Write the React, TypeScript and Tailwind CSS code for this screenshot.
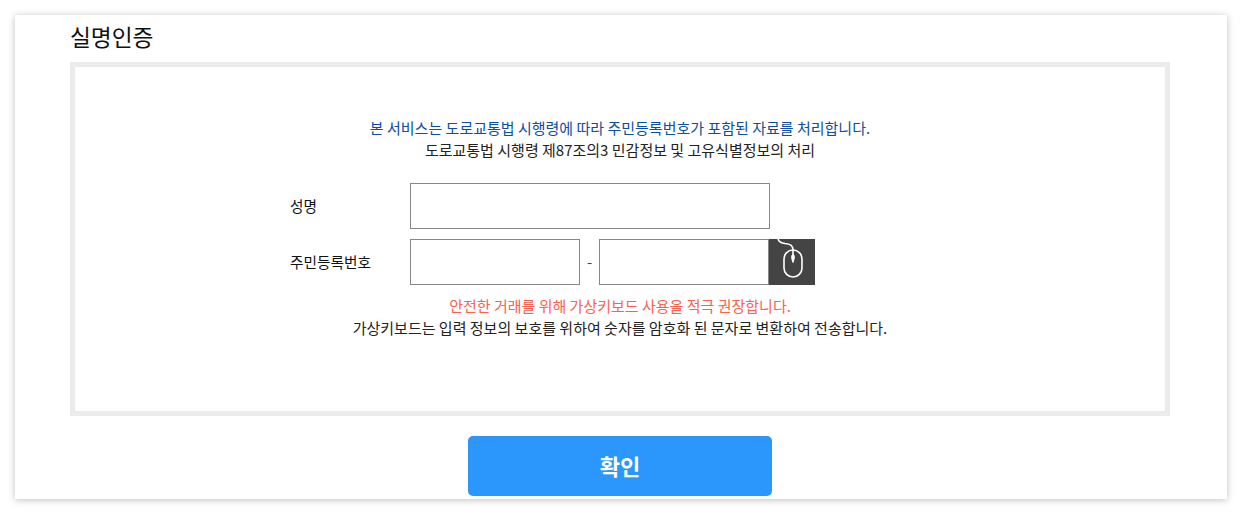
import React from "react";

const MouseIcon = () => (
  <svg width="46" height="46" viewBox="0 0 46 46" fill="none" stroke="#fff" strokeWidth="1.6">
    <path d="M9 0c1 3 3 4 7 4.500c5 .5 8 1.500 8 6.500" />
    <rect x="15" y="11" width="18" height="27" rx="9" />
    <path d="M24 11v4" />
    <path d="M24 15c1.800 1.500 1.800 4 0 8.500c-1.800-4.500-1.800-7 0-8.500z" fill="#fff" strokeWidth="1" />
  </svg>
);

export default function App() {
  return (
    <div className="w-[1242px] h-[514px] bg-white pt-[15px] px-[15px] overflow-hidden font-['Noto_Sans_CJK_KR','Noto_Sans',sans-serif]">
      <div className="h-[484px] bg-white shadow-[0_1px_7px_rgba(0,0,0,0.25)] pl-[55px] pr-[57px]">
        <h2 className="h-[47px] text-[22.700px] leading-[44px] text-[#111]">실명인증</h2>
        <div className="h-[354px] border-[5px] border-[#ebebeb] flex flex-col items-center pt-[50px]">
          <p className="text-[15px] leading-[22px] text-[#0b4ea2]">본 서비스는 도로교통법 시행령에 따라 주민등록번호가 포함된 자료를 처리합니다.</p>
          <p className="text-[15px] leading-[22px] text-[#222]">도로교통법 시행령 제87조의3 민감정보 및 고유식별정보의 처리</p>
          <div className="w-[660px] mt-[22px] flex flex-col gap-[10px] text-[#111] text-[15px]">
            <div className="flex items-center">
              <label className="w-[120px] text-[14.700px]">성명</label>
              <input type="text" className="w-[360px] h-[46px] border border-[#888] bg-white" />
            </div>
            <div className="flex items-center">
              <label className="w-[120px] text-[14.700px]">주민등록번호</label>
              <input type="text" className="w-[170px] h-[46px] border border-[#888] bg-white" />
              <span className="w-[19px] text-center text-[#444]">-</span>
              <input type="password" className="w-[170px] h-[46px] border border-[#888] bg-white" />
              <button type="button" className="w-[46px] h-[46px] bg-[#444444]">
                <MouseIcon />
              </button>
            </div>
          </div>
          <p className="mt-[10px] text-[15px] leading-[22px] text-[#f8624f]">안전한 거래를 위해 가상키보드 사용을 적극 권장합니다.</p>
          <p className="text-[15px] leading-[22px] text-[#222]">가상키보드는 입력 정보의 보호를 위하여 숫자를 암호화 된 문자로 변환하여 전송합니다.</p>
        </div>
        <div className="flex justify-center mt-5">
          <button type="button" className="w-[304px] h-[60px] pb-[2px] rounded-[5px] bg-[#2b97fc] text-white text-[22px] font-bold">확인</button>
        </div>
      </div>
    </div>
  );
}
